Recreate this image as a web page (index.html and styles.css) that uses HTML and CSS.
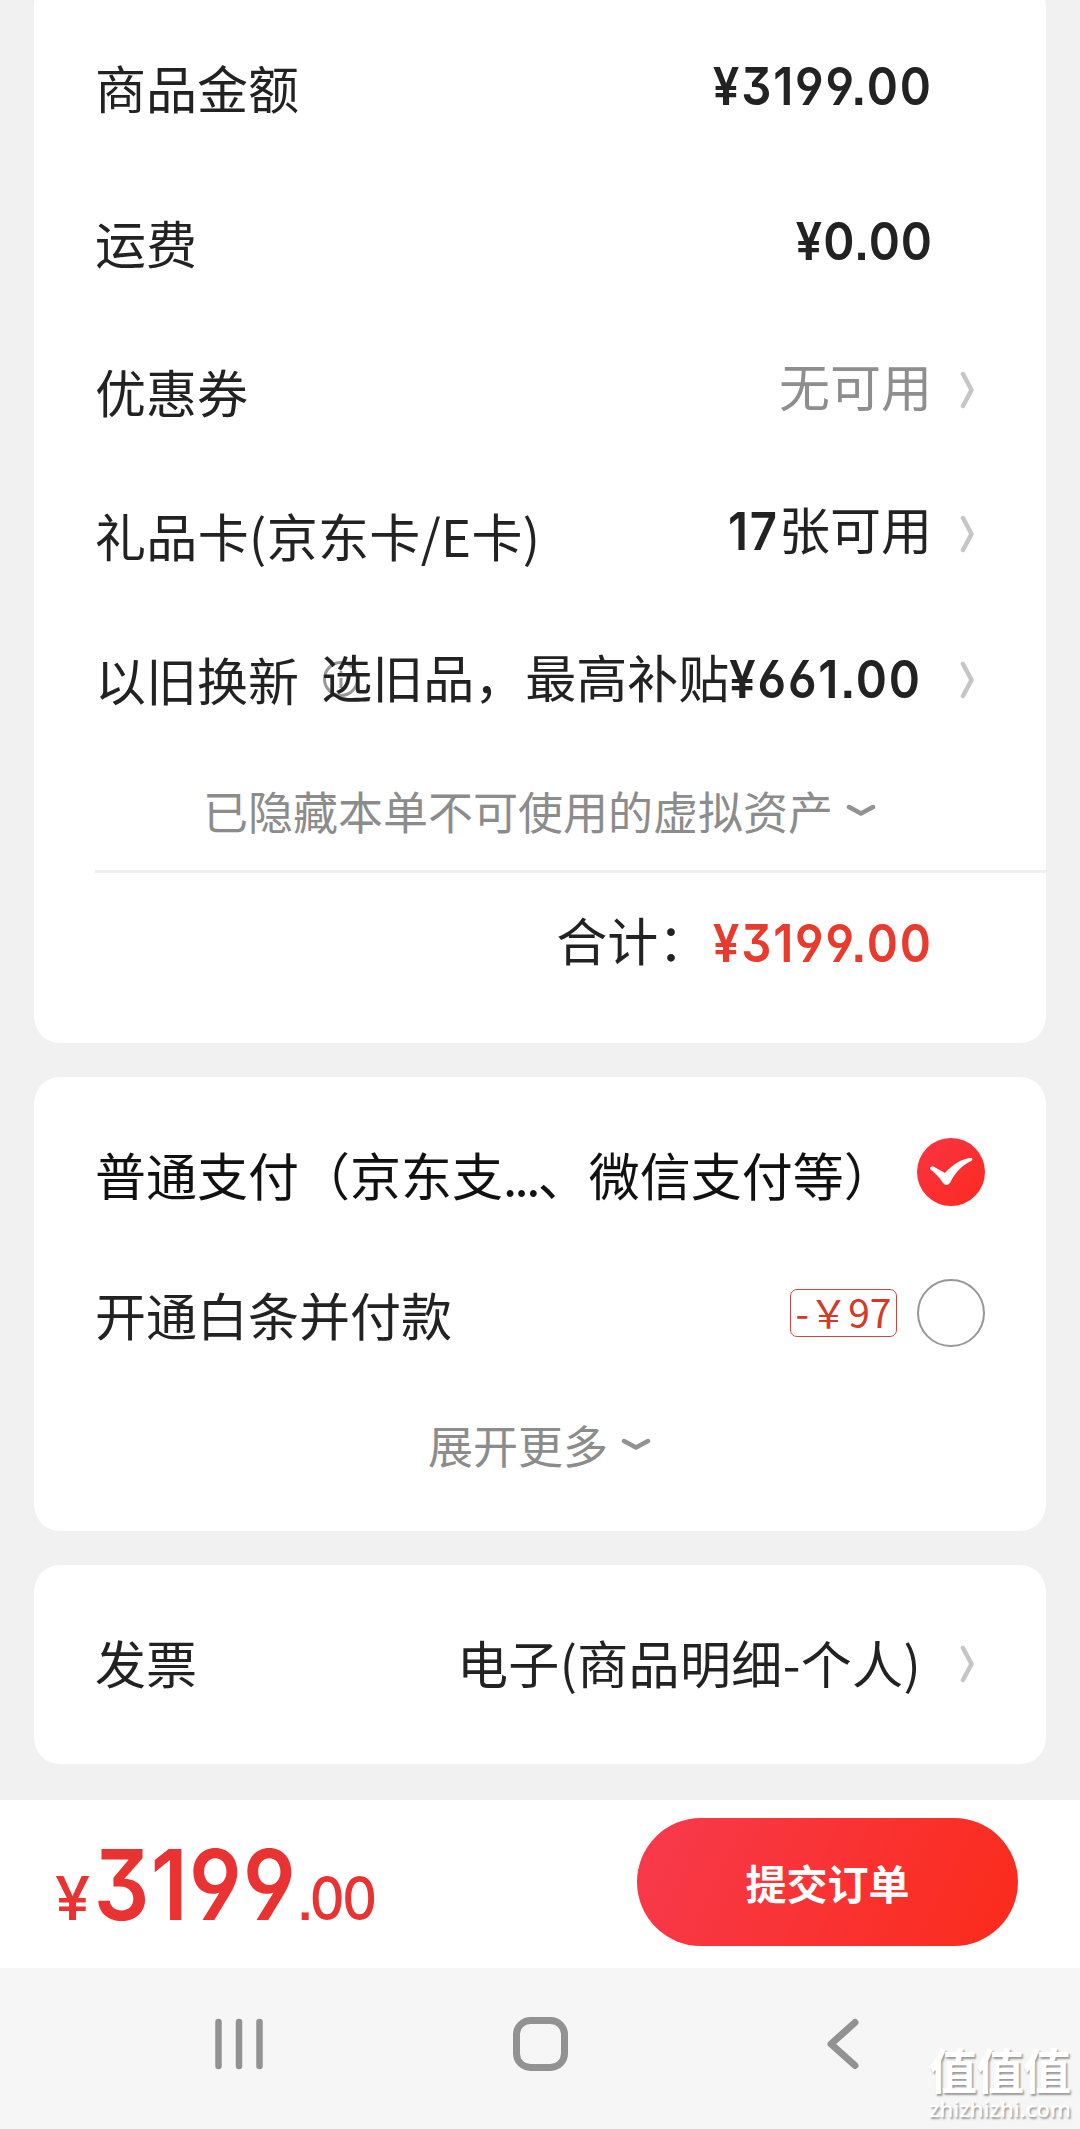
FILE: index.html
```html
<!DOCTYPE html>
<html lang="zh-CN">
<head>
<meta charset="utf-8">
<title>确认订单</title>
<link rel="stylesheet" href="styles.css">
</head>
<body>
<svg class="defs" width="0" height="0">
  <symbol id="right" viewBox="0 0 16 38"><path d="M3 3 L11.500 19 L3 35" fill="none" stroke="#c6c6c6" stroke-width="4.500" stroke-linecap="round" stroke-linejoin="round"/></symbol>
  <symbol id="down" viewBox="0 0 30 16"><path d="M3 4 L15 10.500 L27 4" fill="none" stroke="#929292" stroke-width="4.500" stroke-linecap="round" stroke-linejoin="round"/></symbol>
</svg>
<main class="content">
  <section class="card summary">
    <div class="row r1"><span class="label">商品金额</span><span class="value num">¥3199.00</span></div>
    <div class="row r2"><span class="label">运费</span><span class="value num">¥0.00</span></div>
    <div class="row r3"><span class="label">优惠券</span><span class="value muted">无可用</span><svg class="go"><use href="#right"/></svg></div>
    <div class="row r4"><span class="label gift">礼品卡(京东卡/E卡)</span><span class="value"><b class="num count">17</b>张可用</span><svg class="go"><use href="#right"/></svg></div>
    <div class="row r5"><span class="label">以旧换新<svg class="info" viewBox="0 0 38 38"><circle cx="19" cy="19" r="16.5"/><path d="M19 11v3M19 18v10"/></svg></span><span class="value trade">选旧品，最高补贴<b class="num subsidy">¥661.00</b></span><svg class="go"><use href="#right"/></svg></div>
    <div class="more hidden-assets"><span>已隐藏本单不可使用的虚拟资产</span><svg class="down"><use href="#down"/></svg></div>
    <div class="total"><span>合计：</span><span class="num red">¥3199.00</span></div>
  </section>
  <section class="card pay">
    <div class="row p1"><span class="label">普通支付（京东支<span class="dots">...</span>、微信支付等）</span>
      <svg class="radio" viewBox="0 0 70 70"><defs><linearGradient id="rg" x1="0" y1="0" x2="1" y2="1"><stop offset="0" stop-color="#fa3445"/><stop offset="1" stop-color="#fc2a1e"/></linearGradient></defs><circle cx="35" cy="35" r="34" fill="url(#rg)"/><path d="M14 32 C14 29 17 29 20 31 L29 36 C37 27 46 22 54 21 C57 20.500 57 23 55 24 C45 29 38 37 34 46 Q30.500 50 27 46 C23 40 19 36 14 32Z" fill="#fff"/></svg>
    </div>
    <div class="row p2"><span class="label">开通白条并付款</span><span class="badge"><span>-</span><span class="yen">￥</span><span>97</span></span>
      <svg class="radio" viewBox="0 0 70 70"><circle cx="35" cy="35" r="33" fill="none" stroke="#979797" stroke-width="2"/></svg>
    </div>
    <div class="more expand"><span>展开更多</span><svg class="down"><use href="#down"/></svg></div>
  </section>
  <section class="card invoice">
    <div class="row i1"><span class="label">发票</span><span class="value bill">电子(商品明细-个人)</span><svg class="go"><use href="#right"/></svg></div>
  </section>
</main>
<footer class="checkout">
  <div class="price"><span class="cur">¥</span><span class="int">3199</span><span class="dec">.00</span></div>
  <button class="submit">提交订单</button>
</footer>
<nav class="sysnav">
  <svg class="key" viewBox="0 0 60 60"><path d="M9.500 8v44M30 8v44M50.500 8v44" stroke-width="6.500"/></svg>
  <svg class="key" viewBox="0 0 60 60"><rect x="5.500" y="6.500" width="48" height="47" rx="14" stroke-width="7"/></svg>
  <svg class="key" viewBox="0 0 60 60"><path d="M42 8.500 L18 30 L42 51.500" stroke-width="7"/></svg>
  <div class="mark"><span class="mark-name">值值值</span><span class="mark-url">zhizhizhi.com</span></div>
</nav>
</body>
</html>
```
FILE: styles.css
```css
* { box-sizing: border-box; }
body {
  margin: 0;
  width: 1080px;
  height: 2129px;
  overflow: hidden;
  display: flex;
  flex-direction: column;
  background: #f1f1f1;
  color: #222;
  font-family: "Noto Sans CJK SC", sans-serif;
  font-size: 51px;
  line-height: 74px;
  white-space: nowrap;
}
svg { display: block; flex: none; }
.defs { position: absolute; }
.content {
  height: 1800px;
  padding: 0 34px;
  display: flex;
  flex-direction: column;
  gap: 34px;
}
.card { background: #fff; border-radius: 26px; padding-left: 61px; }
.summary {
  height: 1063px;
  margin-top: -20px;
  padding-top: 28px;
}
.row { display: flex; align-items: center; padding-right: 70px; }
.r1 { height: 156px; }
.r2 { height: 154px; }
.r3 { height: 144px; }
.r4 { height: 144px; }
.r5 { height: 148px; }
.label { position: relative; padding-top: 2px; }
.value { margin-left: auto; margin-right: 28px; }
.r1 .value, .r2 .value { margin-right: 43px; }
.num {
  display: inline-block;
  font-family: Inter, Roboto, sans-serif;
  font-feature-settings: "ss01", "cv09", "ss07";
  font-weight: 600;
  font-size: 52px;
  letter-spacing: 2px;
  transform: scaleX(0.91);
  transform-origin: right center;
}
.r1 .num, .r2 .num { padding-top: 2px; }
.r2 .num { letter-spacing: 1px; }
.count { margin-left: -7px; }
.subsidy { margin-left: -19px; }
.muted { color: #8e8e8e; padding-bottom: 10px; }
.r4 .value { padding-bottom: 9px; }
.gift, .bill { letter-spacing: 0.35px; }
.r5 .label { padding-top: 0; padding-bottom: 2px; }
.trade { position: relative; padding-bottom: 4px; margin-right: 38px; }
.go { width: 16px; height: 38px; }
.info {
  position: absolute;
  left: 227px;
  top: 18px;
  width: 38px;
  height: 38px;
  fill: none;
  stroke: #999;
  stroke-width: 3px;
}
.more {
  display: flex;
  align-items: center;
  justify-content: center;
  gap: 13px;
  color: #8c8c8c;
  font-size: 45px;
}
.down { width: 30px; height: 16px; }
.hidden-assets { height: 116px; padding-right: 62px; padding-bottom: 2px; }
.total {
  height: 143px;
  border-top: 3px solid #f0f0f0;
  display: flex;
  align-items: center;
  justify-content: flex-end;
  padding-right: 113px;
  padding-bottom: 9px;
}
.total .red { color: #e83b2d; padding-top: 11px; margin-left: -18px; }
.pay { height: 454px; padding-top: 24px; }
.p1 { height: 142px; }
.p1 .label { padding-top: 4px; color: #111; }
.dots { letter-spacing: -2.6px; }
.p2 { height: 140px; }
.row .radio { width: 70px; height: 70px; margin-left: auto; }
.p1, .p2 { padding-right: 60px; }
.badge {
  width: 107px;
  height: 48px;
  margin-left: auto;
  margin-right: 19px;
  border: 1.5px solid #c64a40;
  border-radius: 7px;
  color: #d23a2a;
  font-size: 39px;
  line-height: 42px;
  display: flex;
  justify-content: center;
}
.badge + .radio { margin-left: 0; }
.expand { height: 124px; padding-right: 62px; }
.invoice { height: 199px; }
.i1 { height: 197px; }
.bill { margin-right: 39px; }
.i1 .label, .bill { padding-bottom: 4px; padding-top: 0; }
.checkout {
  height: 168px;
  background: #fff;
  display: flex;
  align-items: center;
  justify-content: space-between;
  padding: 0 62px 4px 55px;
}
.price {
  display: flex;
  align-items: baseline;
  color: #e93232;
  font-family: Inter, Roboto, sans-serif;
  font-feature-settings: "ss01", "cv09", "ss07";
  font-weight: 500;
  line-height: 120px;
  padding-top: 18px;
  transform: scaleX(0.9);
  transform-origin: left center;
}
.cur {
  font-size: 61px;
  margin-right: 9px;
  transform: scaleX(1.15);
  transform-origin: left center;
}
.int { font-size: 97px; font-weight: 600; letter-spacing: 1.5px; }
.dec { font-size: 60px; letter-spacing: -2.5px; }
.submit {
  width: 381px;
  height: 128px;
  border: 0;
  padding: 0;
  border-radius: 64px;
  background: linear-gradient(115deg, #f73a4d, #fb2b1a);
  color: #fff;
  font: 700 41px/128px "Noto Sans CJK SC", sans-serif;
}
.sysnav {
  position: relative;
  height: 161px;
  background: #f6f6f6;
  display: flex;
  gap: 242px;
  padding: 46px 0 0 209px;
}
.key {
  width: 60px;
  height: 60px;
  fill: none;
  stroke: #929292;
  stroke-linecap: round;
  stroke-linejoin: round;
}
.mark {
  position: absolute;
  left: 929px;
  top: 73px;
  width: 142px;
  display: flex;
  flex-direction: column;
  color: #fff;
  text-shadow: 1.5px 1.5px 2px #999;
}
.mark-name { font-size: 48px; line-height: 54px; font-weight: 700; letter-spacing: -1px; }
.mark-url { font: 500 22px/26px "Noto Sans", sans-serif; }
```
